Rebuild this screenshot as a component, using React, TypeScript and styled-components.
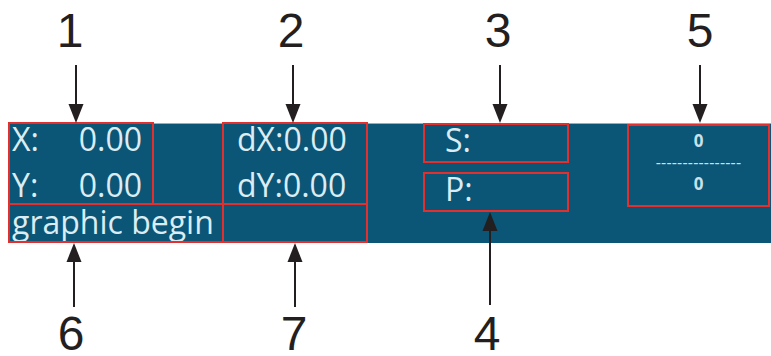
import React from "react";
import styled, { createGlobalStyle } from "styled-components";

const GlobalStyle = createGlobalStyle`
  html, body {
    margin: 0;
    padding: 0;
    background: #fff;
  }
  body {
    width: 771px;
    height: 356px;
    overflow: hidden;
  }
`;

const Figure = styled.div`
  width: 771px;
  height: 356px;
  display: flex;
  flex-direction: column;
  font-family: "Open Sans", "DejaVu Sans", sans-serif;
`;

const CalloutRow = styled.div<{ $h: number }>`
  position: relative;
  flex: none;
  height: ${(p) => p.$h}px;
`;

const Num = styled.span<{ $x: number; $y: number }>`
  position: absolute;
  left: ${(p) => p.$x}px;
  top: ${(p) => p.$y}px;
  transform: translateX(-50%);
  font-family: "Liberation Sans", Arial, sans-serif;
  font-size: 48px;
  line-height: 40px;
  color: #231f20;
`;

const ArrowSvg = styled.svg<{ $x: number; $y: number }>`
  position: absolute;
  left: ${(p) => p.$x - 8}px;
  top: ${(p) => p.$y}px;
  z-index: 2;
  overflow: visible;
`;

type ArrowProps = { x: number; from: number; to: number; up?: boolean };

function Arrow({ x, from, to, up }: ArrowProps) {
  const h = to - from;
  return (
    <ArrowSvg $x={x} $y={from} width={16} height={h} viewBox={`0 0 16 ${h}`}>
      {up ? (
        <>
          <line x1={8} y1={12} x2={8} y2={h} stroke="#231f20" strokeWidth={2} />
          <polygon points="8,0 0.5,19 15.5,19" fill="#231f20" />
        </>
      ) : (
        <>
          <line x1={8} y1={0} x2={8} y2={h - 12} stroke="#231f20" strokeWidth={2} />
          <polygon points={`0.5,${h - 19} 15.5,${h - 19} 8,${h}`} fill="#231f20" />
        </>
      )}
    </ArrowSvg>
  );
}

const Bar = styled.div`
  flex: none;
  box-sizing: border-box;
  height: 120px;
  margin-left: 9px;
  background: #0b5577;
  border-top: 1px solid #8fb0c0;
  display: flex;
  align-items: flex-start;
  color: #dbecf2;
  font-size: 32px;
  line-height: 32px;
  white-space: nowrap;
`;

const Panel = styled.div`
  box-sizing: border-box;
  outline: 2px solid #e3302e;
  outline-offset: -1px;
`;

const ReadoutGrid = styled.div`
  display: grid;
  grid-template-columns: 144px 70px 144px;
  grid-template-rows: 81px 38px;
  margin-top: -1px;
`;

const CoordBox = styled(Panel)`
  grid-column: 1;
  grid-row: 1;
  display: flex;
  flex-direction: column;
  gap: 14px;
  padding: 0 11px 0 3px;
`;

const CoordRow = styled.div`
  display: flex;
  justify-content: space-between;
`;

const DeltaBox = styled(Panel)`
  grid-column: 3;
  grid-row: 1;
  display: flex;
  flex-direction: column;
  gap: 14px;
  padding-left: 14px;
`;

const StatusBox = styled(Panel)`
  grid-column: 1 / 3;
  grid-row: 2;
  padding: 3px 0 0 3px;
  line-height: 30px;
`;

const SpareBox = styled(Panel)`
  grid-column: 3;
  grid-row: 2;
`;

const FieldColumn = styled.div`
  display: flex;
  flex-direction: column;
  gap: 11px;
  margin-left: 57px;
`;

const FieldBox = styled(Panel)`
  width: 144px;
  height: 38px;
  padding-left: 21px;
`;

const ScaleBox = styled(Panel)`
  width: 141px;
  height: 81px;
  margin: 1px 0 0 60px;
  padding-top: 5px;
  display: flex;
  flex-direction: column;
  align-items: center;
  font-size: 17px;
  font-weight: 700;
  line-height: 21.5px;
  color: #c9e1ea;
`;

const ScaleRule = styled.span`
  font-size: 16px;
  font-weight: 400;
  letter-spacing: 0.2px;
`;

const top = [
  { n: "1", nx: 70, ax: 76 },
  { n: "2", nx: 291, ax: 293 },
  { n: "3", nx: 498, ax: 500 },
  { n: "5", nx: 700, ax: 700 },
];

export default function App() {
  return (
    <>
      <GlobalStyle />
      <Figure>
        <CalloutRow $h={123}>
          {top.map((c) => (
            <React.Fragment key={c.n}>
              <Num $x={c.nx} $y={11}>{c.n}</Num>
              <Arrow x={c.ax} from={65} to={123} />
            </React.Fragment>
          ))}
        </CalloutRow>
        <Bar>
          <ReadoutGrid>
            <CoordBox>
              <CoordRow>
                <span>X:</span>
                <span>0.00</span>
              </CoordRow>
              <CoordRow>
                <span>Y:</span>
                <span>0.00</span>
              </CoordRow>
            </CoordBox>
            <DeltaBox>
              <span>dX:0.00</span>
              <span>dY:0.00</span>
            </DeltaBox>
            <StatusBox>graphic begin</StatusBox>
            <SpareBox />
          </ReadoutGrid>
          <FieldColumn>
            <FieldBox>S:</FieldBox>
            <FieldBox>P:</FieldBox>
          </FieldColumn>
          <ScaleBox>
            <span>0</span>
            <ScaleRule>----------------</ScaleRule>
            <span>0</span>
          </ScaleBox>
        </Bar>
        <CalloutRow $h={113}>
          <Arrow x={74} from={0} to={64} up />
          <Num $x={71} $y={71}>6</Num>
          <Arrow x={295} from={0} to={64} up />
          <Num $x={294} $y={71}>7</Num>
          <Arrow x={490} from={-31} to={62} up />
          <Num $x={487} $y={71}>4</Num>
        </CalloutRow>
      </Figure>
    </>
  );
}
